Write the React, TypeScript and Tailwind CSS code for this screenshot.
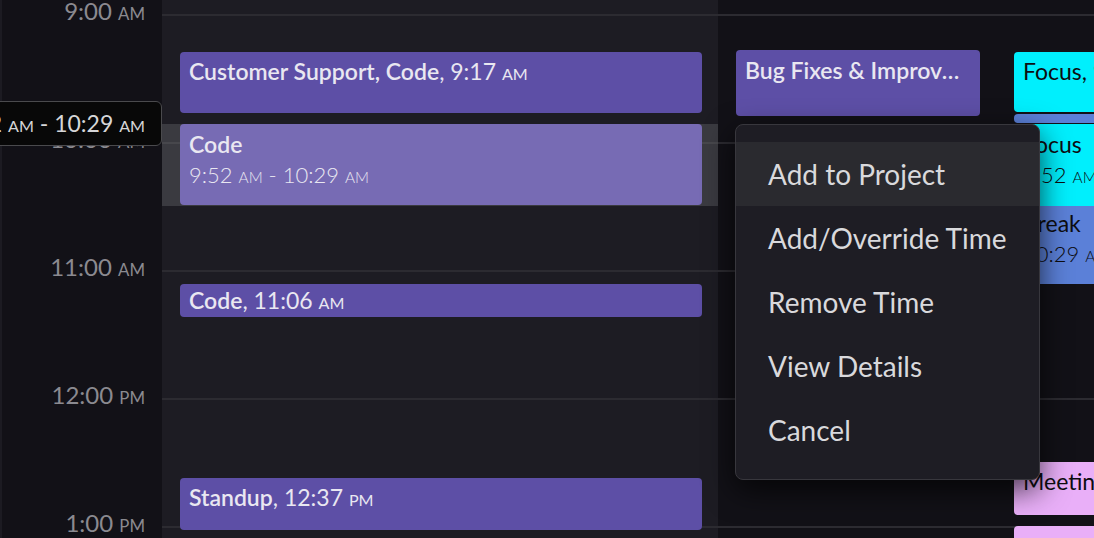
import type { ReactNode } from 'react'

const hours = [
  { t: '9:00', m: 'AM' },
  { t: '10:00', m: 'AM' },
  { t: '11:00', m: 'AM' },
  { t: '12:00', m: 'PM' },
  { t: '1:00', m: 'PM' },
]

function Sm({ children }: { children: ReactNode }) {
  return <span className="text-[0.7em]">{children}</span>
}

function Time({ t, m }: { t: string; m: string }) {
  return (
    <>
      {t} <Sm>{m}</Sm>
    </>
  )
}

function HourRows() {
  return (
    <div className="pt-[14px]">
      {hours.map((h) => (
        <div key={h.t} className="h-[128px] border-t-2 border-[#2c2b31]" />
      ))}
    </div>
  )
}

type Ev = {
  pos: string
  bg: string
  title: string
  time?: { t: string; m: string }
  sub?: ReactNode
  pad?: string
  dark?: boolean
}

const col1: Ev[] = [
  { pos: 'top-[52px] h-[61px]', bg: 'bg-[#5d4fa6]', title: 'Customer Support, Code', time: { t: '9:17', m: 'AM' } },
  {
    pos: 'top-[124px] h-[81px]',
    bg: 'bg-[#776bb4]',
    title: 'Code',
    sub: (
      <>
        <Time t="9:52" m="AM" /> - <Time t="10:29" m="AM" />
      </>
    ),
    pad: 'pt-[6px]',
  },
  { pos: 'top-[284px] h-[33px]', bg: 'bg-[#5d4fa6]', title: 'Code', time: { t: '11:06', m: 'AM' }, pad: 'pt-[2px]' },
  { pos: 'top-[478px] h-[52px]', bg: 'bg-[#5d4fa6]', title: 'Standup', time: { t: '12:37', m: 'PM' } },
]

const col3: Ev[] = [
  { pos: 'top-[52px] h-[60px]', bg: 'bg-[#00effd]', title: 'Focus', time: { t: '9:17', m: 'AM' }, dark: true },
  { pos: 'top-[114px] h-[9px]', bg: 'bg-[#5b80d8]', title: '', dark: true },
  { pos: 'top-[124px] h-[82px]', bg: 'bg-[#00effd]', title: 'Focus', sub: <Time t="9:52" m="AM" />, dark: true, pad: 'pt-[6px]' },
  { pos: 'top-[206px] h-[78px]', bg: 'bg-[#5b80d8]', title: 'Break', sub: <Time t="10:29" m="AM" />, dark: true, pad: 'pt-[3px]' },
  { pos: 'top-[462px] h-[53px]', bg: 'bg-[#e9aff8]', title: 'Meeting', time: { t: '12:30', m: 'PM' }, dark: true },
  { pos: 'top-[526px] h-[40px]', bg: 'bg-[#e9aff8]', title: '', dark: true },
]

function Event({ ev }: { ev: Ev }) {
  return (
    <div
      className={`absolute left-[18px] right-[16px] overflow-hidden rounded-[4px] pl-[9px] pr-[12px] ${ev.pos} ${ev.bg} ${
        ev.pad ?? 'pt-[5px]'
      } ${ev.dark ? 'text-[#0d0d10]' : 'text-[#e9e7f1]'}`}
    >
      {ev.title && (
        <div className="truncate text-[23px] leading-[28px]">
          <span className={ev.dark ? 'font-normal' : 'font-semibold'}>{ev.title}</span>
          {ev.time && (
            <span className="font-normal">
              , <Time t={ev.time.t} m={ev.time.m} />
            </span>
          )}
        </div>
      )}
      {ev.sub && <div className="mt-[3px] truncate text-[22px] font-light leading-[28px]">{ev.sub}</div>}
    </div>
  )
}

const menu = ['Add to Project', 'Add/Override Time', 'Remove Time', 'View Details', 'Cancel']

export default function App() {
  return (
    <div className="relative flex h-[538px] w-[1094px] overflow-hidden bg-[#121117] font-['Lato','Noto_Sans',sans-serif]">
      {/* time gutter */}
      <div className="relative w-[162px] shrink-0 border-l-2 border-[#1c1b22] bg-[#121117]">
        <div className="pt-[14px]">
          {hours.map((h) => (
            <div key={h.t} className="h-[128px] pr-[17px] text-right">
              <div className="relative -top-[18px] text-[24px] leading-[29px] text-[#8b8a90]">
                <Time t={h.t} m={h.m} />
              </div>
            </div>
          ))}
        </div>
      </div>

      {/* main column */}
      <div className="relative w-[556px] shrink-0 bg-[#1d1c23]">
        <HourRows />
        <div className="absolute inset-x-0 top-[124px] h-[82px] bg-white/[0.13]" />
        {col1.map((ev, i) => (
          <Event key={i} ev={ev} />
        ))}
      </div>

      {/* second column */}
      <div className="relative w-[278px] shrink-0">
        <HourRows />
        <div className="absolute left-[18px] right-[16px] top-[50px] h-[66px] rounded-[4px] bg-[#5d4fa6] pl-[9px] pr-[16px] pt-[6px]">
          <div className="truncate text-[23px] font-semibold leading-[28px] text-[#e9e7f1]">Bug Fixes &amp; Improvements</div>
        </div>
      </div>

      {/* third column */}
      <div className="relative w-[278px] shrink-0">
        <HourRows />
        {col3.map((ev, i) => (
          <Event key={i} ev={ev} />
        ))}
      </div>

      {/* drag tooltip */}
      <div className="absolute right-[932px] top-[101px] flex h-[45px] items-center whitespace-nowrap rounded-[6px] border border-[#4a4a4d] bg-[#080808] px-4 text-[23px] text-[#d6d6d8]">
        <span>
          <Time t="9:52" m="AM" /> - <Time t="10:29" m="AM" />
        </span>
      </div>

      {/* context menu */}
      <div className="absolute left-[735px] top-[124px] w-[305px] rounded-[8px] border border-[#38373d] bg-[#1e1d24] py-[17px] shadow-[0_10px_30px_rgba(0,0,0,0.7)]">
        {menu.map((item, i) => (
          <div
            key={item}
            className={`flex h-[64px] items-center pl-[32px] text-[28px] text-[#d9d9dc] ${i === 0 ? 'bg-[#2a2a2f]' : ''}`}
          >
            {item}
          </div>
        ))}
      </div>
    </div>
  )
}
